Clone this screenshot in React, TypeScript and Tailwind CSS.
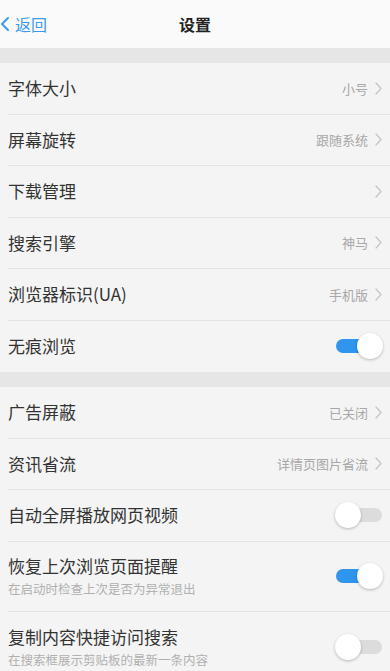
import { ChevronLeft } from 'lucide-react'

type Row = {
  title: string
  value?: string
  sub?: string
  arrow?: boolean
  toggle?: boolean
  on?: boolean
}

const sectionA: Row[] = [
  { title: '字体大小', value: '小号', arrow: true },
  { title: '屏幕旋转', value: '跟随系统', arrow: true },
  { title: '下载管理', arrow: true },
  { title: '搜索引擎', value: '神马', arrow: true },
  { title: '浏览器标识(UA)', value: '手机版', arrow: true },
  { title: '无痕浏览', toggle: true, on: true },
]

const sectionB: Row[] = [
  { title: '广告屏蔽', value: '已关闭', arrow: true },
  { title: '资讯省流', value: '详情页图片省流', arrow: true },
  { title: '自动全屏播放网页视频', toggle: true, on: false },
  { title: '恢复上次浏览页面提醒', sub: '在启动时检查上次是否为异常退出', toggle: true, on: true },
  { title: '复制内容快捷访问搜索', sub: '在搜索框展示剪贴板的最新一条内容', toggle: true, on: false },
]

function Arrow() {
  return (
    <svg width="7" height="13" viewBox="0 0 7 13" fill="none" className="ml-[7px]">
      <path d="M1 1 L6 6.5 L1 12" stroke="#c4c4c4" strokeWidth="1.2" strokeLinecap="round" strokeLinejoin="round" />
    </svg>
  )
}

function Toggle({ on }: { on?: boolean }) {
  return (
    <div className="relative mr-[-1px] h-[28px] w-[48px]">
      <div
        className={`absolute left-[1px] right-[1px] top-[7px] h-[14px] rounded-full ${
          on ? 'bg-[#2f95ee]' : 'bg-[#dcdcdc]'
        }`}
      />
      <div
        className={`absolute top-[1px] h-[26px] w-[26px] rounded-full bg-white shadow-[0_1px_3px_rgba(0,0,0,0.25)] ${
          on ? 'right-0' : 'left-0'
        }`}
      />
    </div>
  )
}

function SettingRow({ row, last }: { row: Row; last: boolean }) {
  return (
    <div className="pl-2">
      <div
        className={`flex items-center justify-between pr-[8px] ${row.sub ? 'h-[70px]' : 'h-[51.5px]'} ${
          last ? '' : 'border-b border-[#e3e3e3]'
        }`}
      >
        <div className="flex flex-col">
          <span className="text-[17px] leading-[22px] text-[#333]">{row.title}</span>
          {row.sub ? (
            <span className="mt-[4px] text-[12.5px] leading-[16px] text-[#b0b0b0]">{row.sub}</span>
          ) : null}
        </div>
        {row.toggle ? (
          <Toggle on={row.on} />
        ) : (
          <div className="flex items-center text-[13px] text-[#a8a8a8]">
            {row.value ? <span>{row.value}</span> : null}
            <Arrow />
          </div>
        )}
      </div>
    </div>
  )
}

export default function App() {
  return (
    <div
      className="min-h-[671px] w-[390px] overflow-hidden bg-[#f4f4f4]"
      style={{ fontFamily: '"Noto Sans CJK SC", "Noto Sans", sans-serif' }}
    >
      <header className="relative flex h-[48px] items-center justify-center bg-[#fafafa]">
        <div className="absolute left-0 top-0 flex h-full items-center text-[#3d9be9]">
          <ChevronLeft className="-ml-[7px] h-[24px] w-[24px]" strokeWidth={2} />
          <span className="-ml-[2px] text-[16px]">返回</span>
        </div>
        <h1 className="text-[16px] font-bold text-[#222]">设置</h1>
      </header>

      <div className="h-[15px] bg-[#e6e6e6]" />
      <section>
        {sectionA.map((row, i) => (
          <SettingRow key={row.title} row={row} last={i === sectionA.length - 1} />
        ))}
      </section>

      <div className="h-[15px] bg-[#e6e6e6]" />
      <section>
        {sectionB.map((row, i) => (
          <SettingRow key={row.title} row={row} last={i === sectionB.length - 1} />
        ))}
      </section>
    </div>
  )
}
